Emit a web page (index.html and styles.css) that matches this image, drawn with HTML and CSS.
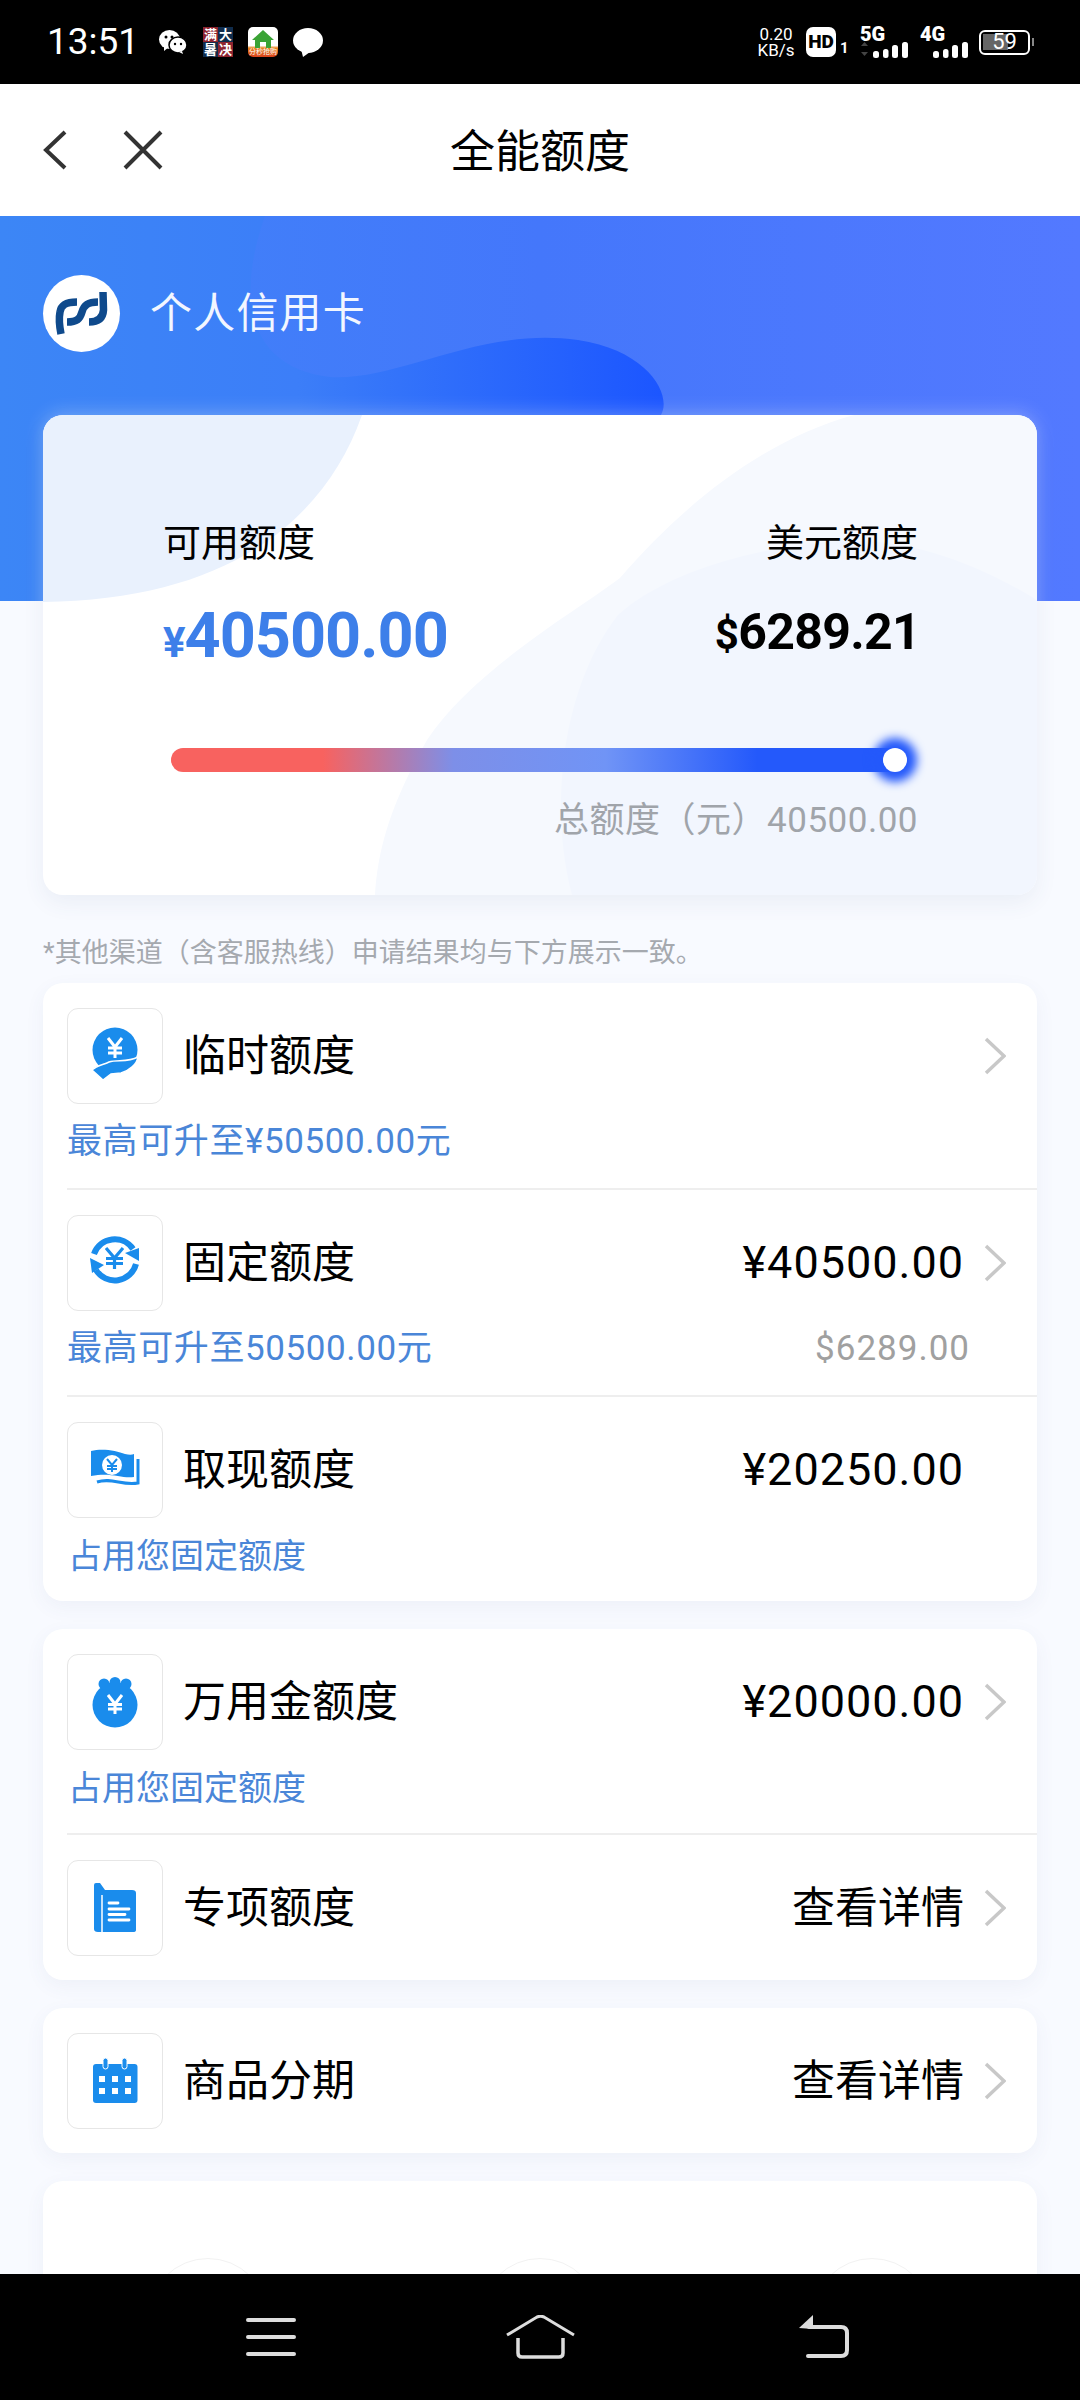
FILE: index.html
```html
<!DOCTYPE html>
<html lang="zh">
<head>
    <meta charset="UTF-8">
    <meta name="viewport" content="width=device-width, initial-scale=1.0">
    <title>全能额度</title>
    <link rel="stylesheet" href="styles.css">
</head>
<body>
    <div class="screen">
        <div class="status-bar">
            <div class="status-left">
                <span class="time">13:51</span>
                <svg class="st-wechat" width="28" height="24" viewBox="0 0 28 24">
                    <ellipse cx="10.5" cy="9.5" rx="10.5" ry="9.5" fill="#fff"/>
                    <path d="M5 16 L5 21 L10 17Z" fill="#fff"/>
                    <ellipse cx="19" cy="15" rx="9" ry="8" fill="#fff" stroke="#000" stroke-width="1.5"/>
                    <path d="M23 21 L24 24 L20 22Z" fill="#fff"/>
                    <circle cx="7" cy="7" r="1.5" fill="#000"/>
                    <circle cx="13" cy="7" r="1.5" fill="#000"/>
                    <circle cx="16" cy="14" r="1.2" fill="#000"/>
                    <circle cx="22" cy="14" r="1.2" fill="#000"/>
                </svg>
                <div class="st-promo">
                    <span class="promo-red">满</span><span class="promo-navy">大</span>
                    <span class="promo-navy">暑</span><span class="promo-red">决</span>
                </div>
                <div class="st-home">
                    <svg width="24" height="19" viewBox="0 0 24 19">
                        <path d="M12 1 L23 11 H20 V19 H15 V13 H9 V19 H4 V11 H1Z" fill="#3aa335"/>
                    </svg>
                    <span class="home-label">分秒抢购</span>
                </div>
                <svg class="st-chat" width="30" height="29" viewBox="0 0 30 29">
                    <ellipse cx="15" cy="12.5" rx="15" ry="12.5" fill="#fff"/>
                    <path d="M8 21 L10 29 L17 24Z" fill="#fff"/>
                </svg>
            </div>
            <div class="status-right">
                <div class="net-speed"><span>0.20</span><span>KB/s</span></div>
                <div class="hd-badge">HD</div>
                <span class="sim-no">1</span>
                <div class="signal">
                    <span class="signal-type">5G</span>
                    <svg width="48" height="17" viewBox="0 0 48 17">
                        <path d="M1 5 L4.500 1 L8 5Z M1 11 L4.500 15 L8 11Z" fill="#444"/>
                        <rect x="13" y="10" width="6" height="7" rx="2.500" fill="#fff"/>
                        <rect x="23" y="8" width="5.500" height="9" rx="2.500" fill="#fff"/>
                        <rect x="32" y="4" width="6" height="13" rx="2.500" fill="#fff"/>
                        <rect x="42" y="1" width="6" height="16" rx="2.500" fill="#fff"/>
                    </svg>
                </div>
                <div class="signal">
                    <span class="signal-type">4G</span>
                    <svg width="48" height="17" viewBox="0 0 48 17">
                        <rect x="13" y="10" width="6" height="7" rx="2.500" fill="#fff"/>
                        <rect x="23" y="8" width="5.500" height="9" rx="2.500" fill="#fff"/>
                        <rect x="32" y="4" width="6" height="13" rx="2.500" fill="#fff"/>
                        <rect x="42" y="1" width="6" height="16" rx="2.500" fill="#fff"/>
                    </svg>
                </div>
                <div class="battery">59</div>
            </div>
        </div>

        <div class="nav-bar">
            <div class="nav-icons">
                <svg width="24" height="40" viewBox="0 0 24 40">
                    <path d="M22 2 L3 20 L22 38" fill="none" stroke="#333" stroke-width="4"/>
                </svg>
                <svg width="40" height="40" viewBox="0 0 40 40">
                    <path d="M2 2 L38 38 M38 2 L2 38" fill="none" stroke="#333" stroke-width="4"/>
                </svg>
            </div>
            <h1 class="nav-title">全能额度</h1>
        </div>

        <div class="content">
            <svg class="hero-bg" width="1080" height="385" viewBox="0 0 1080 385">
                <defs>
                    <linearGradient id="heroBase" x1="0" y1="0" x2="1" y2="0">
                        <stop offset="0" stop-color="#3f84f7"/>
                        <stop offset="0.5" stop-color="#4477fb"/>
                        <stop offset="1" stop-color="#5379ff"/>
                    </linearGradient>
                    <linearGradient id="heroBlob" x1="0" y1="0" x2="661" y2="0" gradientUnits="userSpaceOnUse">
                        <stop offset="0" stop-color="#3c86f6"/>
                        <stop offset="0.45" stop-color="#3c7ef8"/>
                        <stop offset="1" stop-color="#1c56ff"/>
                    </linearGradient>
                </defs>
                <rect width="1080" height="385" fill="url(#heroBase)"/>
                <path d="M0 0 H265 C240 70 240 150 330 161 C400 165 480 110 578 124 C650 135 672 180 661 199 V385 H0Z" fill="url(#heroBlob)"/>
            </svg>

            <div class="brand">
                <div class="brand-logo">
                    <svg width="77" height="77" viewBox="0 0 77 77">
                        <path d="M18 59 C16 49 16 42 17 37 C18 30 23 27 34 27" fill="none" stroke="#0f4a8c" stroke-width="7.500"/>
                        <path d="M24 47 C34 47 37 44 39 37 C41 30 45 27 55 27" fill="none" stroke="#0f4a8c" stroke-width="7.500"/>
                        <path d="M46 47 C55 47 60 43 60.500 35 L60 17" fill="none" stroke="#0f4a8c" stroke-width="7.500"/>
                    </svg>
                </div>
                <span class="brand-name">个人信用卡</span>
            </div>

            <div class="limit-card">
                <svg class="limit-shapes" width="994" height="480" viewBox="0 0 994 480">
                    <path d="M0 0 H319 C280 110 180 185 0 187Z" fill="#e9f1fd"/>
                    <path d="M811 0 C720 25 640 90 577 163 C535 195 430 255 384 325 C350 385 335 430 332 480 H994 V0Z" fill="#f6f9fe"/>
                    <path d="M994 185 C920 140 850 120 783 127 C700 135 620 160 575 200 C520 270 505 390 529 480 H994Z" fill="#f2f6fe"/>
                </svg>
                <div class="limit-row">
                    <div class="limit-col">
                        <span class="limit-label">可用额度</span>
                        <span class="limit-value blue"><small>¥</small>40500.00</span>
                    </div>
                    <div class="limit-col right">
                        <span class="limit-label">美元额度</span>
                        <span class="limit-value black"><small>$</small>6289.21</span>
                    </div>
                </div>
                <div class="track">
                    <div class="thumb"></div>
                </div>
                <div class="limit-total">总额度（元）40500.00</div>
            </div>

            <p class="note">*其他渠道（含客服热线）申请结果均与下方展示一致。</p>

            <div class="panel first">
                <div class="item">
                    <div class="item-head">
                        <div class="icon-box">
                            <svg width="96" height="96" viewBox="0 0 96 96">
                                <circle cx="48" cy="42" r="22.500" fill="#1a8cec"/>
                                <path d="M41 30 L48 39 L55 30 M48 39 V50 M41 40 H55 M41 45 H55" fill="none" stroke="#fff" stroke-width="3"/>
                                <path d="M25 62 C30 57 36 57 42 54 C50 51 60 55 71 49 C70 56 62 63 54 65 L44 66 L36 72Z" fill="#1a8cec" stroke="#fff" stroke-width="1.500"/>
                            </svg>
                        </div>
                        <span class="item-title">临时额度</span>
                        <svg class="chevron" width="22" height="38" viewBox="0 0 22 38">
                            <path d="M2 2 L20 19 L2 36" fill="none" stroke="#c8c8c8" stroke-width="3.500"/>
                        </svg>
                    </div>
                    <div class="item-sub">最高可升至¥50500.00元</div>
                </div>
                <div class="item">
                    <div class="item-head">
                        <div class="icon-box">
                            <svg width="96" height="96" viewBox="0 0 96 96">
                                <path d="M27 39 A22 22 0 0 1 66 34" fill="none" stroke="#1a8cec" stroke-width="6"/>
                                <path d="M58 38 L72 33 L72 46Z" fill="#1a8cec"/>
                                <path d="M69 49 A22 22 0 0 1 29 55" fill="none" stroke="#1a8cec" stroke-width="6"/>
                                <path d="M23 43 L37 50 L25 58Z" fill="#1a8cec"/>
                                <path d="M39 33 L47.500 43 L56 33 M47.500 43 V54 M39 43.500 H56 M39 48.500 H56" fill="none" stroke="#1a8cec" stroke-width="3.200"/>
                            </svg>
                        </div>
                        <span class="item-title">固定额度</span>
                        <span class="item-value amount">¥40500.00</span>
                        <svg class="chevron" width="22" height="38" viewBox="0 0 22 38">
                            <path d="M2 2 L20 19 L2 36" fill="none" stroke="#c8c8c8" stroke-width="3.500"/>
                        </svg>
                    </div>
                    <div class="item-foot">
                        <span class="item-sub">最高可升至50500.00元</span>
                        <span class="item-usd">$6289.00</span>
                    </div>
                </div>
                <div class="item">
                    <div class="item-head">
                        <div class="icon-box">
                            <svg width="96" height="96" viewBox="0 0 96 96">
                                <path d="M24 29 C36 26 50 29 58 32 C62 33 65 33 67 32 V55 C55 57 45 50 24 54Z" fill="#1a8cec"/>
                                <circle cx="45" cy="43" r="10" fill="#fff"/>
                                <path d="M40 37 L45 43 L50 37 M45 43 V50 M40 44 H50 M40 47 H50" fill="none" stroke="#1a8cec" stroke-width="2"/>
                                <path d="M71 37 V61 C55 64 45 55 30 60" fill="none" stroke="#1a8cec" stroke-width="3"/>
                            </svg>
                        </div>
                        <span class="item-title">取现额度</span>
                        <span class="item-value amount no-arrow">¥20250.00</span>
                    </div>
                    <div class="item-sub indent">占用您固定额度</div>
                </div>
            </div>

            <div class="panel">
                <div class="item compact">
                    <div class="item-head">
                        <div class="icon-box">
                            <svg width="96" height="96" viewBox="0 0 96 96">
                                <circle cx="48" cy="51" r="22.500" fill="#1a8cec"/>
                                <circle cx="37" cy="30" r="5.500" fill="#1a8cec"/>
                                <circle cx="48" cy="28.500" r="5.500" fill="#1a8cec"/>
                                <circle cx="59" cy="30" r="5.500" fill="#1a8cec"/>
                                <rect x="38" y="29" width="20" height="8" fill="#1a8cec"/>
                                <path d="M41 41 L48 50 L55 41 M48 50 V60 M41 50.500 H55 M41 55 H55" fill="none" stroke="#fff" stroke-width="3"/>
                            </svg>
                        </div>
                        <span class="item-title">万用金额度</span>
                        <span class="item-value amount">¥20000.00</span>
                        <svg class="chevron" width="22" height="38" viewBox="0 0 22 38">
                            <path d="M2 2 L20 19 L2 36" fill="none" stroke="#c8c8c8" stroke-width="3.500"/>
                        </svg>
                    </div>
                    <div class="item-sub indent">占用您固定额度</div>
                </div>
                <div class="item plain">
                    <div class="item-head">
                        <div class="icon-box">
                            <svg width="96" height="96" viewBox="0 0 96 96">
                                <path d="M27 25 Q27 23 29 23 H33 L38 30 H65 Q69 30 69 33 V70 Q69 72 66 72 H31 Q27 72 27 69Z" fill="#1a8cec"/>
                                <path d="M35 35 V72" stroke="#fff" stroke-width="1.500"/>
                                <path d="M42 43 H51 M42 49 H62 M42 54.500 H58 M42 60 H62" fill="none" stroke="#fff" stroke-width="2.800" stroke-linecap="round"/>
                            </svg>
                        </div>
                        <span class="item-title">专项额度</span>
                        <span class="item-value">查看详情</span>
                        <svg class="chevron" width="22" height="38" viewBox="0 0 22 38">
                            <path d="M2 2 L20 19 L2 36" fill="none" stroke="#c8c8c8" stroke-width="3.500"/>
                        </svg>
                    </div>
                </div>
            </div>

            <div class="panel">
                <div class="item plain">
                    <div class="item-head">
                        <div class="icon-box">
                            <svg width="96" height="96" viewBox="0 0 96 96">
                                <rect x="26" y="31" width="44.500" height="39" rx="3" fill="#1a8cec"/>
                                <rect x="36" y="25" width="5" height="11" rx="2.500" fill="#1a8cec" stroke="#fff" stroke-width="1"/>
                                <rect x="55" y="25" width="5" height="11" rx="2.500" fill="#1a8cec" stroke="#fff" stroke-width="1"/>
                                <path d="M32 43 h6 v6 h-6z M45 43 h6 v6 h-6z M58 43 h6 v6 h-6z M32 55 h6 v6 h-6z M45 55 h6 v6 h-6z M58 55 h6 v6 h-6z" fill="#fff"/>
                            </svg>
                        </div>
                        <span class="item-title">商品分期</span>
                        <span class="item-value">查看详情</span>
                        <svg class="chevron" width="22" height="38" viewBox="0 0 22 38">
                            <path d="M2 2 L20 19 L2 36" fill="none" stroke="#c8c8c8" stroke-width="3.500"/>
                        </svg>
                    </div>
                </div>
            </div>

            <div class="panel shortcuts">
                <div class="shortcut"></div>
                <div class="shortcut"></div>
                <div class="shortcut"></div>
            </div>
        </div>

        <div class="bottom-nav">
            <svg class="nav-menu" width="50" height="46" viewBox="0 0 50 46">
                <path d="M2 6 H48 M2 23 H48 M2 40 H48" fill="none" stroke="#ddd" stroke-width="4" stroke-linecap="round"/>
            </svg>
            <svg class="nav-home" width="69" height="44" viewBox="0 0 69 44">
                <path d="M1 20 L31 2 Q34.500 0.500 38 2 L68 20" fill="none" stroke="#ddd" stroke-width="3"/>
                <path d="M12 23 V38 Q12 42 16 42 H53 Q57 42 57 38 V23" fill="none" stroke="#ddd" stroke-width="3.500"/>
            </svg>
            <svg class="nav-back" width="50" height="44" viewBox="0 0 50 44">
                <path d="M0 13 L14 0 V14Z" fill="#ddd"/>
                <path d="M10 12 H42 Q48 12 48 18 V35 Q48 41 42 41 H9" fill="none" stroke="#ddd" stroke-width="4" stroke-linecap="round"/>
            </svg>
        </div>
    </div>
</body>
</html>
```

FILE: styles.css
```css
* {
    box-sizing: border-box;
}
body {
    margin: 0;
    font-family: 'Roboto', 'Noto Sans CJK SC', sans-serif;
    background: #f8faff;
}
.screen {
    width: 1080px;
    height: 2400px;
    display: flex;
    flex-direction: column;
    overflow: hidden;
}

/* status bar */
.status-bar {
    height: 84px;
    flex: none;
    background: #000;
    color: #fff;
    display: flex;
    justify-content: space-between;
    align-items: center;
    padding: 0 50px 0 47px;
}
.status-left {
    display: flex;
    align-items: center;
}
.status-right {
    display: flex;
    align-items: center;
}
.time {
    font-size: 37px;
    width: 86px;
    line-height: 44px;
    white-space: nowrap;
}
.st-wechat {
    margin-left: 26px;
}
.st-promo {
    margin-left: 16px;
    width: 30px;
    height: 30px;
    display: grid;
    grid-template-columns: 15px 15px;
    grid-template-rows: 15px 15px;
    font-size: 13px;
    font-weight: 700;
    line-height: 15px;
    text-align: center;
}
.promo-red {
    background: #8e2430;
}
.promo-navy {
    background: #102c4c;
}
.st-home {
    margin-left: 15px;
    width: 30px;
    height: 30px;
    border-radius: 5px;
    background: linear-gradient(#fff 0, #fff 62%, #e8841f 70%, #d9421c 100%);
    display: flex;
    flex-direction: column;
    align-items: center;
    overflow: hidden;
}
.st-home svg {
    flex: none;
    margin-top: 2px;
}
.home-label {
    font-size: 7px;
    line-height: 9px;
    white-space: nowrap;
    color: #fff;
}
.st-chat {
    margin-left: 15px;
}
.net-speed {
    width: 38px;
    display: flex;
    flex-direction: column;
    align-items: center;
    font-size: 17px;
    line-height: 16px;
}
.hd-badge {
    margin-left: 11px;
    width: 30px;
    height: 30px;
    border-radius: 7px;
    background: #fff;
    color: #000;
    font-size: 19px;
    font-weight: 900;
    line-height: 30px;
    text-align: center;
}
.sim-no {
    margin: 12px 0 0 4px;
    width: 8px;
    font-size: 15px;
    font-weight: 700;
    line-height: 18px;
}
.signal {
    margin-left: 12px;
    width: 48px;
    display: flex;
    flex-direction: column;
}
.signal-type {
    font-size: 20px;
    font-weight: 900;
    line-height: 14px;
}
.battery {
    position: relative;
    margin-left: 11px;
    width: 51px;
    height: 25px;
    border: 2.5px solid #fff;
    border-radius: 6px;
    background: linear-gradient(#666, #666) no-repeat 2px center / 25px 16px;
    font-size: 22px;
    line-height: 20px;
    text-align: center;
}
.battery:after {
    content: '';
    position: absolute;
    right: -6px;
    top: 6px;
    width: 2px;
    height: 8px;
    background: #888;
}

/* nav bar */
.nav-bar {
    position: relative;
    height: 132px;
    flex: none;
    background: #fff;
    display: flex;
    align-items: center;
    justify-content: center;
}
.nav-icons {
    position: absolute;
    left: 43px;
    top: 46px;
    display: flex;
    gap: 56px;
}
.nav-title {
    margin: 0 0 3px;
    font-size: 45px;
    font-weight: 400;
    color: #000;
}

/* hero + limit card */
.content {
    position: relative;
    flex: 1;
    min-height: 0;
    overflow: hidden;
    padding: 59px 43px 0;
}
.hero-bg {
    position: absolute;
    left: 0;
    top: 0;
}
.brand {
    position: relative;
    display: flex;
    align-items: center;
    gap: 30px;
}
.brand-logo {
    width: 77px;
    height: 77px;
    border-radius: 50%;
    background: #fff;
}
.brand-logo svg {
    display: block;
}
.brand-name {
    margin-bottom: 8px;
    font-size: 42px;
    letter-spacing: 1.200px;
    color: #f2f6ff;
}
.limit-card {
    position: relative;
    height: 480px;
    margin-top: 63px;
    border-radius: 20px;
    background: #fff;
    box-shadow: 0 8px 22px rgba(60, 80, 130, 0.07), 0 -2px 18px rgba(255, 255, 255, 0.3);
    padding-top: 103px;
    overflow: hidden;
}
.limit-shapes {
    position: absolute;
    left: 0;
    top: 0;
}
.limit-row {
    position: relative;
    display: flex;
    justify-content: space-between;
    height: 155px;
    padding: 0 119px 0 120px;
}
.limit-col {
    display: flex;
    flex-direction: column;
    align-items: flex-start;
}
.limit-col.right {
    align-items: flex-end;
}
.limit-label {
    font-size: 38px;
    line-height: 50px;
    color: #000;
}
.limit-value {
    margin-top: 33px;
    line-height: 70px;
    font-weight: 700;
    white-space: nowrap;
}
.limit-value.blue {
    font-size: 63px;
    letter-spacing: -1px;
    color: #3d7fe9;
}
.limit-value.black {
    margin-right: -2px;
    font-size: 50px;
    line-height: 62px;
    letter-spacing: -0.7px;
    color: #000;
}
.limit-value small {
    font-size: 42px;
    line-height: 1;
}
.track {
    position: relative;
    height: 24px;
    margin: 75px 142px 0 128px;
    border-radius: 12px 0 0 12px;
    background: linear-gradient(90deg, #f8625f 0%, #f8625f 21%, #7d8fe8 39%, #7094f6 60%, #2459fb 81%, #2459fb 100%);
}
.thumb {
    position: absolute;
    right: -12px;
    top: 0;
    width: 24px;
    height: 24px;
    border-radius: 50%;
    background: #fff;
    box-shadow: 0 0 10px 10px #2459fb;
}
.limit-total {
    position: relative;
    margin-top: 27px;
    padding-right: 119px;
    text-align: right;
    font-size: 35px;
    line-height: 44px;
    letter-spacing: 0.5px;
    color: #a0a4aa;
}
.note {
    margin: 38px 0 10px;
    font-size: 27px;
    line-height: 40px;
    color: #a5a9af;
    white-space: nowrap;
}

/* list panels */
.panel {
    position: relative;
    margin-top: 28px;
    border-radius: 20px;
    background: #fff;
    box-shadow: 0 6px 20px rgba(60, 80, 130, 0.06);
}
.panel.first {
    margin-top: 0;
}
.item {
    margin-left: 24px;
    padding: 25px 0 22px;
    border-bottom: 2px solid #eeeeee;
}
.item.compact {
    padding-bottom: 21px;
}
.item:last-child {
    border-bottom: none;
    padding-bottom: 21px;
}
.item.plain {
    padding-bottom: 25px;
}
.item-head {
    display: flex;
    align-items: center;
    height: 95px;
    padding-right: 31px;
}
.icon-box {
    flex: none;
    width: 96px;
    height: 96px;
    border: 1px solid #e6e6e6;
    border-radius: 11px;
    overflow: hidden;
}
.icon-box svg {
    display: block;
    margin: -1px;
}
.item-title {
    margin: 0 0 7px 20px;
    font-size: 43px;
    color: #000;
}
.item-value {
    margin: 0 0 7px auto;
    font-size: 43px;
    color: #000;
}
.item-value.amount {
    margin-bottom: 0;
    font-size: 45px;
    letter-spacing: 1px;
}
.item-value.no-arrow {
    margin-right: 42px;
}
.chevron {
    flex: none;
    margin-left: 20px;
}
.item-head > .item-title + .chevron {
    margin-left: auto;
}
.item-sub {
    margin-top: 15px;
    font-size: 35px;
    line-height: 48px;
    letter-spacing: 0.6px;
    color: #4a86d8;
}
.item-sub.indent {
    margin-left: 1px;
    font-size: 34px;
    letter-spacing: 0;
}
.item-foot {
    display: flex;
    justify-content: space-between;
    padding-right: 67px;
}
.item-usd {
    margin-top: 15px;
    font-size: 35px;
    line-height: 48px;
    letter-spacing: 1px;
    color: #a0a0a0;
}

.shortcuts {
    display: flex;
    justify-content: space-between;
    height: 300px;
    padding: 77px 105px 0;
}
.shortcut {
    width: 120px;
    height: 120px;
    border: 1px solid #f2f2f2;
    border-radius: 50%;
}

/* bottom nav */
.bottom-nav {
    position: relative;
    height: 126px;
    flex: none;
    background: #000;
    display: flex;
    align-items: center;
    padding-left: 246px;
}
.nav-home {
    margin-left: 210px;
}
.nav-back {
    margin-left: 224px;
}
```
